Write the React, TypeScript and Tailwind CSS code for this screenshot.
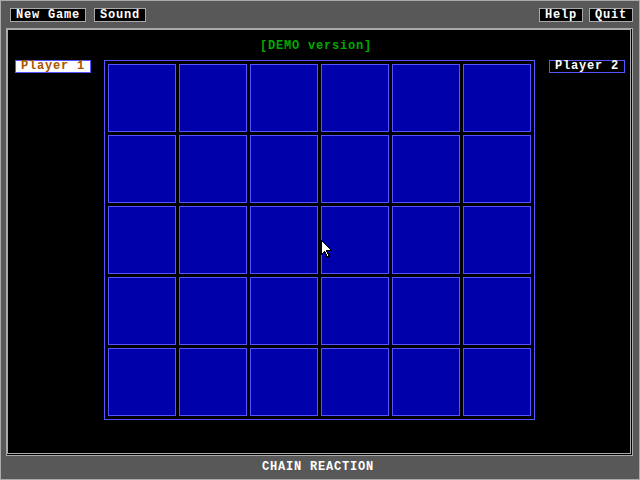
import React from "react";

const font = { fontFamily: '"Liberation Mono", "DejaVu Sans Mono", monospace' };

function Btn({ label, w }: { label: string; w: string }) {
  return (
    <div
      className={`${w} h-[14px] border border-[#aaaaaa] bg-black text-white font-bold text-[12px] leading-[12px] tracking-[0.8px] pl-[5px] whitespace-nowrap`}
    >
      {label}
    </div>
  );
}

export default function App() {
  const cells = Array.from({ length: 30 });
  return (
    <div
      className="relative w-[640px] h-[480px] bg-[#585858] border border-[#aaaaaa] flex flex-col overflow-hidden"
      style={font}
    >
      {/* top bar */}
      <div className="h-[27px] flex items-start pt-[7px] pl-[9px] pr-[6px]">
        <div className="flex gap-[8px]">
          <Btn label="New Game" w="w-[76px]" />
          <Btn label="Sound" w="w-[52px]" />
        </div>
        <div className="ml-auto flex gap-[6px]">
          <Btn label="Help" w="w-[44px]" />
          <Btn label="Quit" w="w-[44px]" />
        </div>
      </div>

      {/* game area */}
      <div className="ml-[5px] w-[627px] h-[428px] border border-[#aaaaaa] bg-black pr-[1px] pb-[1px]">
        <div className="w-full h-full border border-[#aaaaaa] bg-black flex flex-col">
          <div className="mt-[10px] h-[13px] pl-[252px] text-[#00aa00] font-bold text-[12px] leading-[13px] tracking-[0.8px] whitespace-nowrap">
            [DEMO version]
          </div>
          <div className="mt-[7px] flex items-start pl-[7px]">
            <div className="w-[76px] h-[13px] border border-[#5555ff] bg-white text-[#aa5500] font-bold text-[12px] leading-[11px] tracking-[0.8px] pl-[5px] whitespace-nowrap">
              Player 1
            </div>
            <div className="ml-[13px] border border-[#5555ff] p-[3px] grid grid-cols-[repeat(6,68px)] grid-rows-[repeat(5,68px)] gap-[3px]">
              {cells.map((_, i) => (
                <div key={i} className="border border-[#5555ff] bg-[#0000aa]" />
              ))}
            </div>
            <div className="ml-[14px] w-[76px] h-[13px] border border-[#5555ff] bg-black text-white font-bold text-[12px] leading-[11px] tracking-[0.8px] pl-[5px] whitespace-nowrap">
              Player 2
            </div>
          </div>
        </div>
      </div>

      {/* bottom bar */}
      <div className="mt-[5px] h-[13px] pl-[261px] text-white font-bold text-[12px] leading-[13px] tracking-[0.8px] whitespace-nowrap">
        CHAIN REACTION
      </div>

      {/* mouse cursor */}
      <svg
        className="absolute left-[320px] top-[239px]"
        width="13"
        height="19"
        viewBox="0 0 13 19"
        shapeRendering="crispEdges"
      >
        <polygon
          points="0.5,0.5 0.5,14.5 3.5,11.5 6.5,17.5 8.5,16.5 5.5,10.5 10.5,10.5"
          fill="#ffffff"
          stroke="#000000"
          strokeWidth="1"
        />
      </svg>
    </div>
  );
}
